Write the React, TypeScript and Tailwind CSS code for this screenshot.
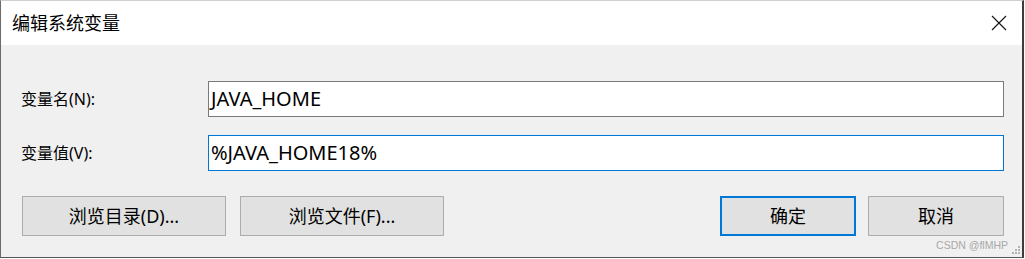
const cjk = "font-['Segoe_UI','Noto_Sans','Noto_Sans_CJK_SC',sans-serif]";

function DialogButton({ label, primary }: { label: string; primary?: boolean }) {
  return (
    <button
      className={
        primary
          ? "h-[40px] bg-[#e1e1e1] border-2 border-[#0078d7] text-[18px] text-black leading-none"
          : "h-[40px] bg-[#e1e1e1] border border-[#adadad] text-[18px] text-black leading-none"
      }
    >
      {label}
    </button>
  );
}

export default function App() {
  return (
    <div className={`w-[1025px] h-[259px] bg-white ${cjk}`}>
      <div className="w-[1024px] h-[258px] flex flex-col border-l border-[#6b6b6b] border-r-2 border-r-[#3c3c3c] border-b border-b-[#555] border-t border-t-[#cfcfcf]">
        {/* title bar */}
        <div className="h-[44px] bg-white flex items-center justify-between pl-[11px] pr-[13px]">
          <span className="text-[18px] text-black pt-[1px]">编辑系统变量</span>
          <svg width="16" height="16" viewBox="0 0 16 16" className="mr-[2px]">
            <path d="M1 1 L15 15 M15 1 L1 15" stroke="#111" strokeWidth="1.1" fill="none" />
          </svg>
        </div>

        {/* body */}
        <div className="flex-1 bg-[#f0f0f0] pl-[20px] pr-[18px] pt-[36px]">
          <div className="flex items-center h-[36px]">
            <span className="w-[187px] text-[16px] text-black">变量名(N):</span>
            <div className="flex-1 h-[36px] bg-white border border-[#7a7a7a] flex items-center pl-[2px] text-[20px] text-black">
              JAVA_HOME
            </div>
          </div>
          <div className="flex items-center h-[36px] mt-[18px]">
            <span className="w-[187px] text-[16px] text-black">变量值(V):</span>
            <div className="flex-1 h-[36px] bg-white border border-[#0078d7] flex items-center pl-[2px] text-[20px] text-black">
              %JAVA_HOME18%
            </div>
          </div>

          <div className="flex mt-[25px]">
            <div className="grid grid-cols-[204px_204px] gap-[14px] ml-[1px]">
              <DialogButton label="浏览目录(D)..." />
              <DialogButton label="浏览文件(F)..." />
            </div>
            <div className="ml-auto grid grid-cols-[136px_136px] gap-[12px]">
              <DialogButton label="确定" primary />
              <DialogButton label="取消" />
            </div>
          </div>

          <div className="relative">
            <span className="absolute right-[-4px] top-[4px] text-[10.5px] leading-none text-[#a8a8a8] font-['Liberation_Sans',sans-serif]">
              CSDN @flMHP
            </span>
            <svg width="10" height="10" viewBox="0 0 10 10" className="absolute right-[-17px] top-[9px]">
              <g fill="#b4b4b4">
                <rect x="7" y="1" width="2" height="2" />
                <rect x="4" y="4" width="2" height="2" />
                <rect x="7" y="4" width="2" height="2" />
                <rect x="1" y="7" width="2" height="2" />
                <rect x="4" y="7" width="2" height="2" />
                <rect x="7" y="7" width="2" height="2" />
              </g>
            </svg>
          </div>
        </div>
      </div>
    </div>
  );
}
